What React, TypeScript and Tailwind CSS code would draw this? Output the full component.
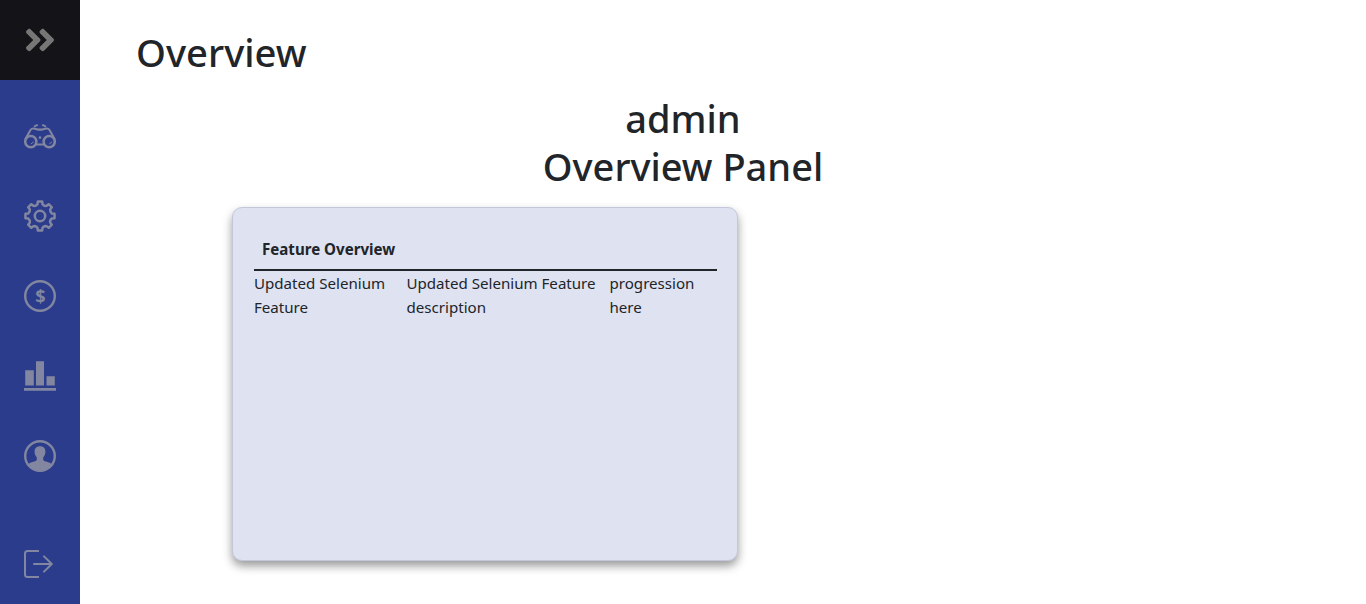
import React from 'react';
import { FaAngleDoubleRight } from 'react-icons/fa';

const BinocularsIcon = () => (
  <svg viewBox="0 0 32 32" className="h-8 w-8" fill="none" stroke="currentColor" strokeWidth="2.5" strokeLinecap="round" strokeLinejoin="round">
    <circle cx="6.8" cy="21.6" r="5.6" />
    <circle cx="25.2" cy="21.6" r="5.6" />
    <path d="M1.6 18.8 6.2 10.4Q7.4 8 10 8.6L13.5 9.4Q16 9.8 18.5 9.4L22 8.6Q24.6 8 25.8 10.4L30.4 18.8" strokeWidth="2.1" />
    <path d="M12.8 24.4H19.2" strokeWidth="2" />
    <path d="M10.8 6.2 13.2 5.2M21.2 6.2 18.8 5.2" strokeWidth="2" />
    <path d="M9.2 22A3 3 0 0 1 7.3 23.8M27.6 22A3 3 0 0 1 25.7 23.8" strokeWidth="1" />
    <circle cx="16" cy="17.6" r="1.3" fill="currentColor" stroke="none" />
  </svg>
);

const teeth = Array.from({ length: 8 }, (_, i) => {
  const at = (deg: number, r: number) => {
    const a = ((i * 45 + deg - 90) * Math.PI) / 180;
    return `${(16 + r * Math.cos(a)).toFixed(2)} ${(16 + r * Math.sin(a)).toFixed(2)}`;
  };
  return `${i === 0 ? 'M' : 'L'}${at(-12, 12.1)}L${at(-8.5, 14.7)}L${at(8.5, 14.7)}L${at(12, 12.1)}Q${at(22.5, 10.6)} ${at(33, 12.1)}`;
}).join('') + 'Z';

const GearIcon = () => (
  <svg viewBox="0 0 32 32" className="h-8 w-8" fill="none" stroke="currentColor" strokeWidth="2.5" strokeLinejoin="round">
    <path d={teeth} />
    <circle cx="16" cy="16" r="5.2" />
  </svg>
);

const DollarIcon = () => (
  <svg viewBox="0 0 32 32" className="h-8 w-8">
    <circle cx="16" cy="16" r="14.8" fill="none" stroke="currentColor" strokeWidth="2.4" />
    <text x="16.3" y="22.5" textAnchor="middle" fill="currentColor" className="font-['Open_Sans',sans-serif] text-[18px] font-bold">$</text>
  </svg>
);

const ChartIcon = () => (
  <svg viewBox="0 0 32 32" className="h-8 w-8" fill="currentColor">
    <path d="M1.2 10.3H9.8V25.6H1.2ZM12 1.3H20V25.6H12ZM22.5 16.2H30.8V25.6H22.5ZM0 28H32V30.8H0Z" />
  </svg>
);

const PersonIcon = () => (
  <svg viewBox="0 0 32 32" className="h-8 w-8">
    <circle cx="16" cy="16" r="14.8" fill="none" stroke="currentColor" strokeWidth="2.4" />
    <path fill="currentColor" d="M16 6.3C19.5 6.3 21.4 8.4 21.4 11.5C21.4 14.2 20.4 16.2 19.2 17.4V19.8C19.8 22 25.5 21.6 28 24.4L27.5 26A15.2 15.2 0 0 1 4.5 26L4 24.4C6.5 21.6 12.2 22 12.8 19.8V17.4C11.6 16.2 10.6 14.2 10.6 11.5C10.6 8.4 12.5 6.3 16 6.3Z" />
  </svg>
);

const LogoutIcon = () => (
  <svg viewBox="0 0 32 32" className="h-8 w-8" fill="none" stroke="currentColor" strokeWidth="2">
    <path d="M15 3H3.5Q1 3 1 5.5V26.5Q1 29 3.5 29H15" />
    <path d="M10 16H27.8M20 8.4 27.8 16 20 23.6" strokeLinejoin="round" strokeLinecap="round" />
  </svg>
);

const navItems = [BinocularsIcon, GearIcon, DollarIcon, ChartIcon, PersonIcon];

export default function App() {
  return (
    <div className="flex h-[604px] w-full overflow-hidden bg-white font-['Noto_Sans','Open_Sans',sans-serif] text-[#212529]">
      <nav className="flex w-20 shrink-0 flex-col bg-[#2c3c8c] text-[#8286a0]">
        <a className="flex h-20 items-center justify-center bg-[#141418] text-[#767676]">
          <FaAngleDoubleRight className="h-9 w-8" />
        </a>
        <div className="mt-4 flex flex-col">
          {navItems.map((Icon, i) => (
            <a key={i} className="flex h-20 items-center justify-center"><Icon /></a>
          ))}
        </div>
        <a className="mt-auto flex h-20 items-center justify-center"><LogoutIcon /></a>
      </nav>
      <main className="flex-1 pt-7">
        <h1 className="ml-[56px] text-[38.2px] leading-[48px] font-medium whitespace-nowrap">Overview</h1>
        <div className="mt-[18px] mr-20 text-center text-[38px] leading-[48px] font-medium">
          <h1>admin</h1>
          <h1>Overview Panel</h1>
        </div>
        <section className="mt-[17px] ml-[152px] h-[354px] w-[506px] rounded-[10px] border border-[#c4c7da] bg-[#dee2f1] py-5 pl-[21px] shadow-[0_5px_10px_rgba(0,0,0,0.4)]">
          <table className="w-[462.5px] table-fixed border-collapse text-left text-[15.1px] leading-6">
            <colgroup>
              <col className="w-[152.5px]" />
              <col className="w-[203px]" />
              <col />
            </colgroup>
            <thead>
              <tr className="border-b-2 border-[#212529]">
                <th colSpan={3} className="h-[42px] px-2 font-bold">Feature Overview</th>
              </tr>
            </thead>
            <tbody>
              <tr className="align-top whitespace-nowrap">
                <td>Updated Selenium<br />Feature</td>
                <td>Updated Selenium Feature<br />description</td>
                <td>progression<br />here</td>
              </tr>
            </tbody>
          </table>
        </section>
      </main>
    </div>
  );
}
